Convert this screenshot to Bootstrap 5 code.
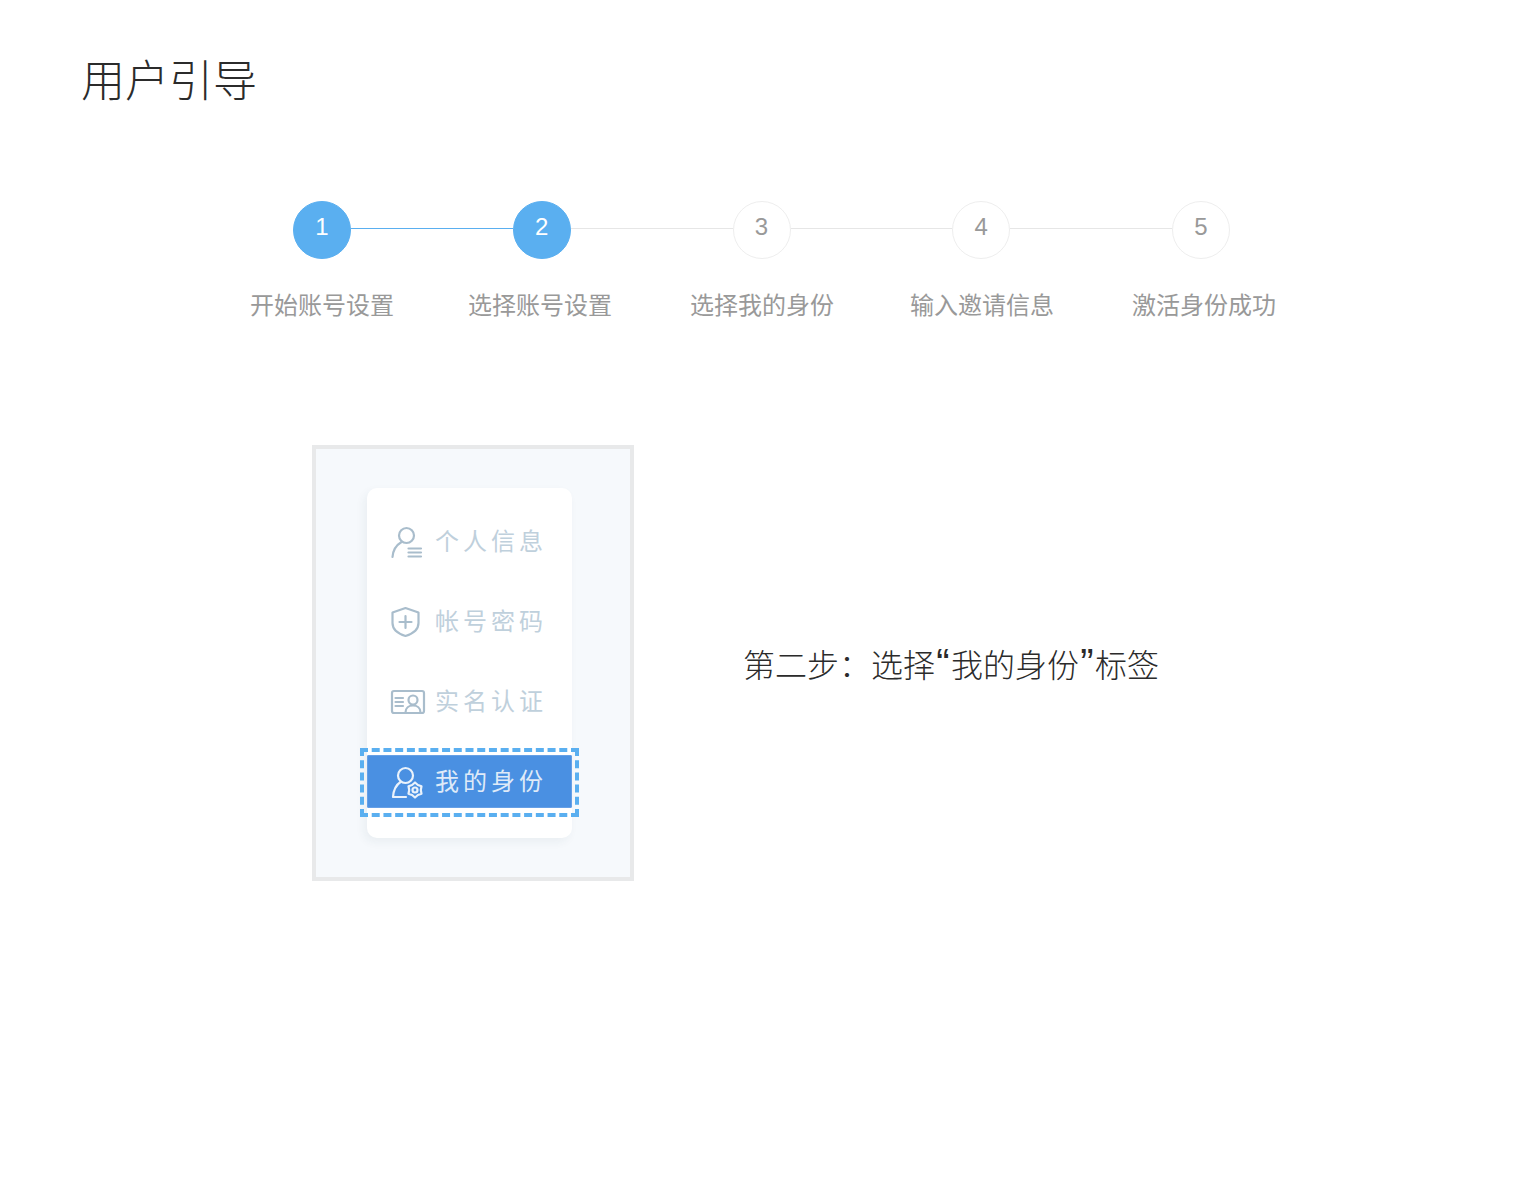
<!DOCTYPE html>
<html lang="zh-CN">
<head>
  <meta charset="UTF-8">
  <meta name="viewport" content="width=device-width, initial-scale=1.0">
  <title>用户引导</title>
  <link href="https://cdn.jsdelivr.net/npm/bootstrap@5.3.2/dist/css/bootstrap.min.css" rel="stylesheet">
  <style>
    body {
      font-family: "Liberation Sans", "Noto Sans CJK SC", sans-serif;
      background: #fff;
      color: #333;
    }
    .guide-page {
      padding: 52px 0 0 81px;
    }
    .guide-title {
      font-size: 44px;
      line-height: 60px;
      font-weight: 300;
      margin: 0 0 89px;
      color: #2b2b2b;
    }
    .step-track {
      width: 937px;
      margin-left: 212px;
    }
    .step-dot {
      width: 58px;
      height: 58px;
      flex: none;
      border: 1px solid #eee;
      color: #999;
      font-size: 24px;
      line-height: 1;
      padding-bottom: 6px;
    }
    .step-dot.is-done {
      background: #5aaff0;
      border-color: #5aaff0;
      color: #fff;
    }
    .step-line {
      flex: 1;
      height: 1px;
      background: #e6e6e6;
    }
    .step-line.is-done {
      background: #5aaff0;
    }
    .step-labels {
      width: 1100px;
      margin-top: 30px;
      margin-left: 131px;
    }
    .step-label {
      width: 220px;
      flex: none;
      font-size: 24px;
      line-height: 34px;
      color: #999;
      text-align: center;
    }
    .guide-body {
      margin: 122px 0 0 231px;
    }
    .shot-frame {
      width: 322px;
      height: 436px;
      flex: none;
      border: 4px solid #e8e9ea;
      background: #f6f9fc;
      padding: 39px 0 0 51px;
    }
    .side-menu {
      width: 205px;
      height: 350px;
      padding-top: 27px;
      background: #fff;
      border-radius: 10px;
      box-shadow: -3px 4px 10px rgba(40, 60, 90, .06);
    }
    .menu-row {
      height: 53px;
      margin-bottom: 27px;
      padding-left: 24px;
      gap: 10px;
      font-size: 24px;
      letter-spacing: 4px;
      color: #bfd0dc;
      white-space: nowrap;
    }
    .menu-row svg {
      width: 34px;
      height: 36px;
      flex: none;
      overflow: visible;
      fill: none;
      stroke: #a9bdcc;
      stroke-width: 2.2;
      stroke-linecap: round;
      stroke-linejoin: round;
    }
    .menu-row.is-active {
      background: #4a90e2;
      border-radius: 2px;
      color: #dfeaf8;
      box-shadow: inset 0 0 0 1px #659fe6;
    }
    .menu-row.is-active svg {
      stroke: #eaf2fb;
    }
    .menu-row.is-active::after {
      content: "";
      position: absolute;
      inset: -7px -7px -9px -7px;
      border: 4px dashed #5aaff0;
      pointer-events: none;
    }
    .guide-note {
      margin: 6px 0 0 109px;
      font-size: 32px;
      line-height: 44px;
      font-weight: 300;
      color: #2b2b2b;
      white-space: nowrap;
    }
    .note-quote {
      display: inline-block;
      width: 16px;
      font-size: 40px;
      line-height: 0;
      text-align: center;
    }
  </style>
</head>
<body>

<div class="guide-page">
  <h1 class="guide-title">用户引导</h1>

  <div class="step-track d-flex align-items-center">
    <div class="step-dot is-done rounded-circle d-flex align-items-center justify-content-center">1</div>
    <div class="step-line is-done mb-1"></div>
    <div class="step-dot is-done rounded-circle d-flex align-items-center justify-content-center">2</div>
    <div class="step-line mb-1"></div>
    <div class="step-dot rounded-circle d-flex align-items-center justify-content-center">3</div>
    <div class="step-line mb-1"></div>
    <div class="step-dot rounded-circle d-flex align-items-center justify-content-center">4</div>
    <div class="step-line mb-1"></div>
    <div class="step-dot rounded-circle d-flex align-items-center justify-content-center">5</div>
  </div>

  <div class="step-labels d-flex">
    <div class="step-label">开始账号设置</div>
    <div class="step-label pe-1">选择账号设置</div>
    <div class="step-label">选择我的身份</div>
    <div class="step-label">输入邀请信息</div>
    <div class="step-label ps-1">激活身份成功</div>
  </div>

  <div class="guide-body d-flex align-items-center">
    <div class="shot-frame">
      <div class="side-menu">
        <div class="menu-row d-flex align-items-center">
          <svg viewBox="0 0 34 36">
            <circle cx="15.5" cy="11.5" r="7.5"/>
            <path d="M1.5 33C2 26 5.5 21 10.5 18"/>
            <path d="M17.5 24.5H30M17.5 28.5H30M17.5 32.5H30"/>
          </svg>
          <span>个人信息</span>
        </div>
        <div class="menu-row d-flex align-items-center">
          <svg viewBox="0 0 34 36">
            <path d="M14.5 4L27.5 8.5V19C27.5 26 21 30 14.5 32C8 30 1.5 26 1.5 19V8.5Z"/>
            <path d="M14.5 12V24M8.5 18H20.5"/>
          </svg>
          <span>帐号密码</span>
        </div>
        <div class="menu-row d-flex align-items-center">
          <svg viewBox="0 0 34 36">
            <rect x="1" y="7" width="32" height="22" rx="2"/>
            <path d="M4.5 14H12M4.5 18H12M4.5 22H12"/>
            <circle cx="22" cy="16" r="4.5"/>
            <path d="M14.5 28.5C14.5 24 18 21.5 22 21.5S29.5 24 29.5 28.5"/>
          </svg>
          <span>实名认证</span>
        </div>
        <div class="menu-row is-active d-flex align-items-center position-relative">
          <svg viewBox="0 0 34 36">
            <circle cx="14.5" cy="11.5" r="7.5"/>
            <path d="M9.5 18C5 21 2.5 26 2 33H15"/>
            <path d="M24 18.5L26.9 21L30.5 22.25L29.8 26L30.5 29.75L26.9 31L24 33.5L21.1 31L17.5 29.75L18.2 26L17.5 22.25L21.1 21Z"/>
            <circle cx="24" cy="26" r="2.5"/>
          </svg>
          <span>我的身份</span>
        </div>
      </div>
    </div>
    <div class="guide-note">第二步：选择<span class="note-quote">“</span>我的身份<span class="note-quote">”</span>标签</div>
  </div>
</div>

<script src="https://cdn.jsdelivr.net/npm/bootstrap@5.3.2/dist/js/bootstrap.bundle.min.js"></script>
</body>
</html>
